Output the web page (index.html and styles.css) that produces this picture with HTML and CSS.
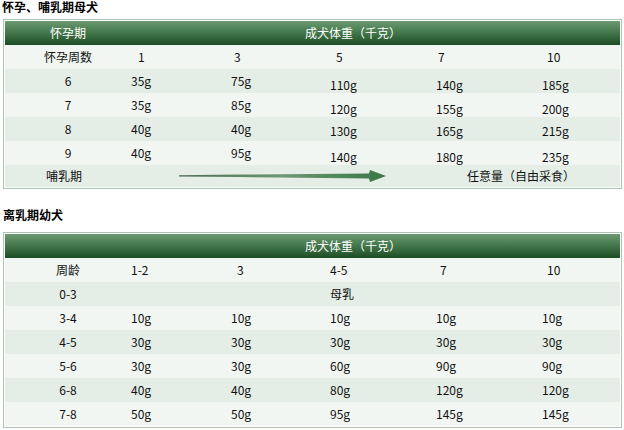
FILE: index.html
```html
<!DOCTYPE html>
<html lang="zh">
<head>
<meta charset="utf-8">
<title>喂食量</title>
<link rel="stylesheet" href="styles.css">
</head>
<body>
<div class="title first">怀孕、哺乳期母犬</div>
<table class="feed">
  <colgroup>
    <col class="c0"><col class="c1"><col class="c2"><col class="c3"><col class="c4"><col class="c5">
  </colgroup>
  <tr class="head">
    <th class="lead">怀孕期</th>
    <th colspan="5" class="wide">成犬体重（千克）</th>
  </tr>
  <tr class="lt nums">
    <td class="lead">怀孕周数</td><td class="p7">1</td><td class="p3">3</td><td class="p6">5</td><td class="p2">7</td><td class="p5">10</td>
  </tr>
  <tr class="dk">
    <td class="lead">6</td><td>35g</td><td>75g</td><td class="low">110g</td><td class="low">140g</td><td class="low">185g</td>
  </tr>
  <tr class="lt">
    <td class="lead">7</td><td>35g</td><td>85g</td><td class="low">120g</td><td class="low">155g</td><td class="low">200g</td>
  </tr>
  <tr class="dk">
    <td class="lead">8</td><td>40g</td><td>40g</td><td class="low2">130g</td><td class="low2">165g</td><td class="low2">215g</td>
  </tr>
  <tr class="lt">
    <td class="lead">9</td><td>40g</td><td>95g</td><td class="low">140g</td><td class="low">180g</td><td class="low">235g</td>
  </tr>
  <tr class="dk short">
    <td class="lead left">哺乳期</td>
    <td colspan="3" class="arrowcell">
      <svg class="arrow" width="208" height="14" viewBox="0 0 208 14" aria-hidden="true">
        <defs>
          <linearGradient id="ag" x1="0" y1="0" x2="1" y2="0">
            <stop offset="0" stop-color="#4f6b55"/>
            <stop offset="0.5" stop-color="#6c9872"/>
            <stop offset="1" stop-color="#3a7646"/>
          </linearGradient>
        </defs>
        <polygon points="0,6.2 60,5.6 190,4.4 191,1 207,7 191,13 190,9.6 60,8 0,7.4" fill="url(#ag)"/>
      </svg>
    </td>
    <td colspan="2" class="free">任意量（自由采食）</td>
  </tr>
</table>

<div class="title second">离乳期幼犬</div>
<table class="feed">
  <colgroup>
    <col class="c0"><col class="c1"><col class="c2"><col class="c3"><col class="c4"><col class="c5">
  </colgroup>
  <tr class="head">
    <th class="lead"></th>
    <th colspan="5" class="wide">成犬体重（千克）</th>
  </tr>
  <tr class="lt nums">
    <td class="lead">周龄</td><td>1-2</td><td class="p6">3</td><td>4-5</td><td class="p4">7</td><td class="p5">10</td>
  </tr>
  <tr class="dk">
    <td class="lead">0-3</td><td></td><td></td><td class="milk">母乳</td><td></td><td></td>
  </tr>
  <tr class="lt">
    <td class="lead">3-4</td><td>10g</td><td>10g</td><td>10g</td><td>10g</td><td>10g</td>
  </tr>
  <tr class="dk">
    <td class="lead">4-5</td><td>30g</td><td>30g</td><td>30g</td><td>30g</td><td>30g</td>
  </tr>
  <tr class="lt">
    <td class="lead">5-6</td><td>30g</td><td>30g</td><td>60g</td><td>90g</td><td>90g</td>
  </tr>
  <tr class="dk">
    <td class="lead">6-8</td><td>40g</td><td>40g</td><td>80g</td><td>120g</td><td>120g</td>
  </tr>
  <tr class="lt">
    <td class="lead">7-8</td><td>50g</td><td>50g</td><td>95g</td><td>145g</td><td>145g</td>
  </tr>
</table>
</body>
</html>
```

FILE: styles.css
```css
html, body {
  background: #ffffff;
}
body {
  margin: 0;
  padding: 0 0 0 3px;
  font-family: "Noto Sans CJK SC", "Liberation Sans", sans-serif;
  font-size: 12px;
  color: #111111;
}
.title {
  font-weight: bold;
  font-size: 12px;
  line-height: 14px;
  color: #000000;
}
.title.first {
  margin: 0 0 5px -1px;
}
.title.second {
  margin: 19px 0 10px 0;
}
.feed {
  table-layout: fixed;
  border-collapse: separate;
  border-spacing: 0;
  width: 619px;
  border: 1px solid #a9c6b0;
  padding: 1px;
  background: #ffffff;
}
.c0 { width: 126px; }
.c1 { width: 100px; }
.c2 { width: 99px; }
.c3 { width: 106px; }
.c4 { width: 106px; }
.c5 { width: 78px; }

.feed tr {
  height: 24px;
}
.feed th,
.feed td {
  height: 24px;
  padding: 0;
  text-align: left;
  vertical-align: middle;
  white-space: nowrap;
  line-height: 14px;
  font-weight: normal;
}
.feed .lead {
  text-align: center;
}
.head th {
  color: #ffffff;
  background: linear-gradient(to bottom, #6c9972 0%, #467a4d 45%, #1d4c24 100%);
}
.head .wide {
  padding-left: 174px;
}
.lt td { background: #f2f6f2; }
.dk td { background: #e4eee6; }

.nums td { color: #111111; }
.p2 { padding-left: 2px !important; }
.p3 { padding-left: 3px !important; }
.p4 { padding-left: 4px !important; }
.p5 { padding-left: 5px !important; }
.p6 { padding-left: 6px !important; }
.p7 { padding-left: 7px !important; }

.feed .low {
  vertical-align: bottom;
  line-height: 16px;
}
.feed .low2 {
  vertical-align: bottom;
  line-height: 20px;
}

.feed tr.short,
.short td { height: 22px; }
.feed .left {
  text-align: left;
  padding-left: 41px;
}
.arrowcell {
  padding-left: 48px !important;
}
.arrow {
  display: block;
}
.free {
  padding-left: 31px !important;
}
.milk {
  padding-left: 0;
}
```
